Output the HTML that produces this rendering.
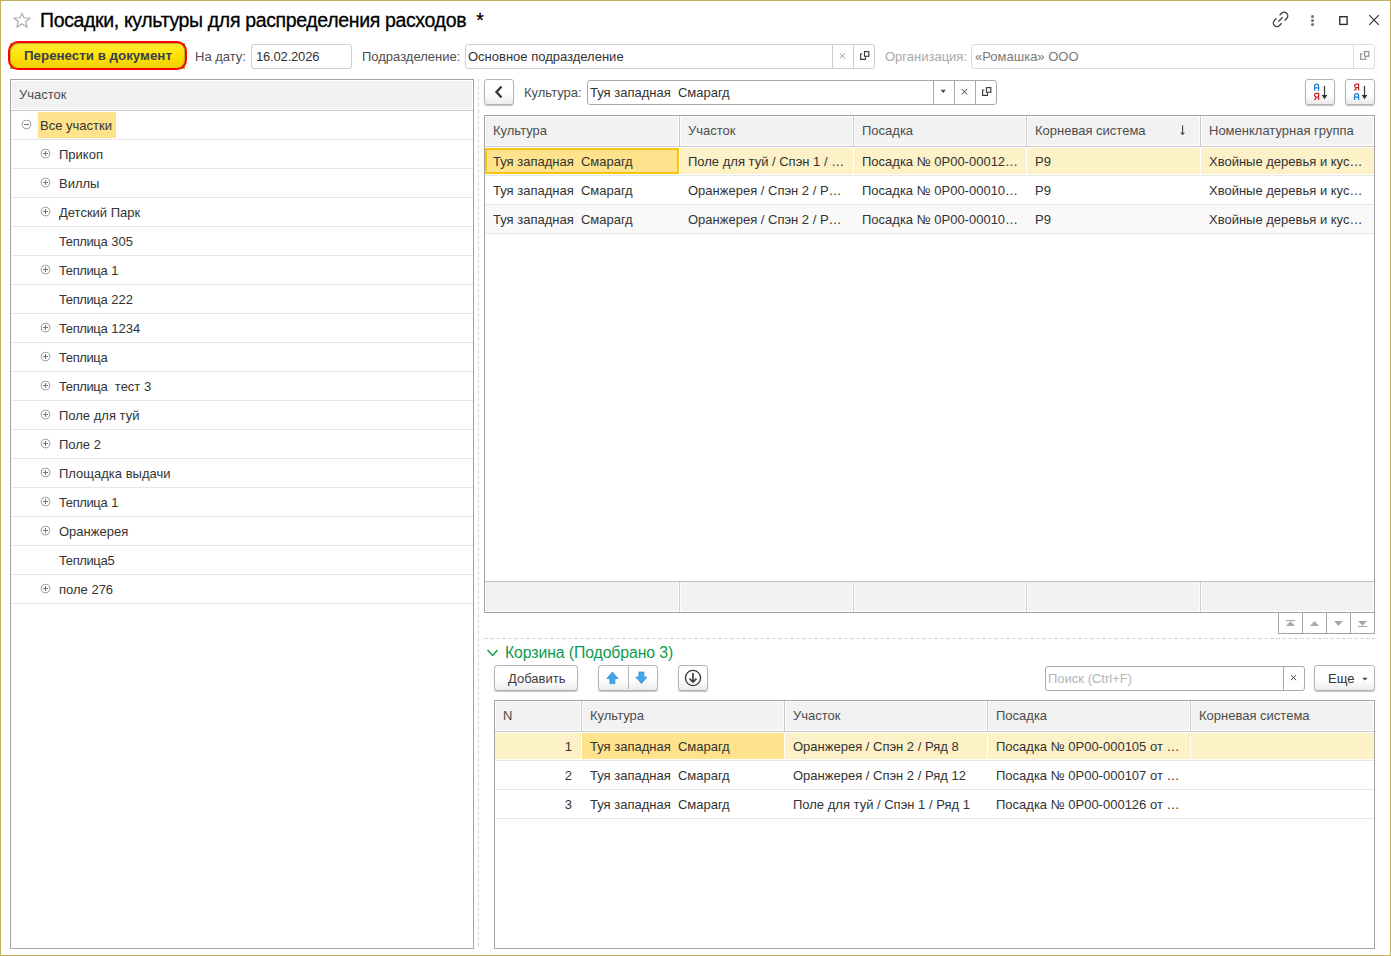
<!DOCTYPE html>
<html><head><meta charset="utf-8">
<style>
*{box-sizing:border-box}
html,body{margin:0;padding:0}
body{width:1391px;height:956px;position:relative;overflow:hidden;background:#fff;font-family:"Liberation Sans",sans-serif;font-size:13px;color:#333}
.a{position:absolute}
.t{position:absolute;white-space:pre;line-height:15px}
#frame{left:0;top:0;width:1391px;height:956px;border:1px solid #c1b25f}
.title{left:40px;top:5px;font-size:19.5px;letter-spacing:-0.35px;line-height:30px;color:#000;-webkit-text-stroke:0.3px #000}
.lbl{color:#4d4d4d}
.inp{position:absolute;border:1px solid #cfcfcf;border-radius:3px;background:#fff;height:25px}
.btn{position:absolute;border:1px solid #b4b4b4;border-radius:3px;background:linear-gradient(#fff 0%,#fff 55%,#ececec 100%);box-shadow:0 1px 1px rgba(0,0,0,.25)}
.grid{position:absolute;border:1px solid #a3a3a3;background:#fff}
.hdr{position:absolute;background:#f2f2f2}
.hl{position:absolute;height:1px;background:#c8c8c8}
.rl{position:absolute;height:1px;background:#e6e6e6}
.vs{position:absolute;width:1px;background:#cfcfcf}
</style></head><body>
<div id="frame" class="a"></div>

<!-- title bar -->
<svg class="a" style="left:0px;top:0px" width="40" height="32" viewBox="0 0 40 32"><path d="M22 13.1 L23.9 17.8 L30.1 18.3 L25.6 21.5 L27.2 27.2 L22 23.7 L16.8 27.2 L18.4 21.5 L13.9 18.3 L20.1 17.8 Z" fill="none" stroke="#a7acb2" stroke-width="1.15" stroke-linejoin="round"/></svg>
<div class="t title">Посадки, культуры для распределения расходов  *</div>

<!-- top right icons -->
<svg class="a" style="left:1268px;top:8px" width="24" height="24" viewBox="0 0 24 24"><g fill="none" stroke="#404040" stroke-width="1.35"><path d="M11.6 7.3 L13.6 5.3 A3.6 3.6 0 0 1 18.7 10.4 L16.6 12.4"/><path d="M8.5 10.3 L6.4 12.4 A3.6 3.6 0 0 0 11.5 17.5 L13.6 15.3"/><path d="M10.4 13.6 L14.6 9.3"/></g></svg>
<svg class="a" style="left:1305px;top:8px" width="16" height="24" viewBox="0 0 16 24"><circle cx="7.5" cy="8.5" r="1.5" fill="#6e6e6e"/><circle cx="7.5" cy="12.5" r="1.5" fill="#6e6e6e"/><circle cx="7.5" cy="16.6" r="1.5" fill="#6e6e6e"/></svg>
<svg class="a" style="left:1336px;top:13px" width="15" height="15" viewBox="0 0 15 15"><rect x="3.8" y="3.7" width="7.3" height="7.7" fill="none" stroke="#2a2a2a" stroke-width="1.35"/></svg>
<svg class="a" style="left:1366px;top:12px" width="16" height="16" viewBox="0 0 16 16"><path d="M3.3 3.2 L12.8 12.8 M12.8 3.2 L3.3 12.8" stroke="#2a2a2a" stroke-width="1.1"/></svg>

<!-- toolbar row -->
<div class="a" style="left:10px;top:43px;width:175px;height:26px;border-radius:1px;background:#a7a13a"></div>
<div class="a" style="left:8px;top:41px;width:179px;height:29px;border:2px solid #f00;border-radius:10px;background:linear-gradient(#ffeb3a 0%,#ffe300 50%,#efd000 100%);box-shadow:inset 1px 1px 0 #b9ac10,inset -1px 0 0 #c0b010"></div>
<div class="t" style="left:24px;top:48px;font-size:13.33px;font-weight:bold;color:#393e50">Перенести в документ</div>

<div class="t lbl" style="left:195px;top:49px">На дату:</div>
<div class="inp" style="left:251px;top:44px;width:101px"></div>
<div class="t" style="left:256px;top:49px;letter-spacing:-0.18px">16.02.2026</div>

<div class="t lbl" style="left:362px;top:49px">Подразделение:</div>
<div class="inp" style="left:465px;top:44px;width:410px"></div>
<div class="vs" style="left:832px;top:45px;height:23px"></div>
<div class="vs" style="left:853px;top:45px;height:23px"></div>
<div class="t" style="left:468px;top:49px">Основное подразделение</div>
<svg class="a" style="left:838px;top:51px" width="10" height="10" viewBox="0 0 10 10"><path d="M1.6 2.2 L7.2 7.6 M7.2 2.2 L1.6 7.6" stroke="#999" stroke-width="1"/></svg>
<svg class="a" style="left:858px;top:49px" width="14" height="14" viewBox="0 0 14 14"><g fill="none" stroke="#3c3c3c" stroke-width="1.15"><rect x="6.5" y="2.6" width="4.3" height="4.7"/><path d="M4.4 5 H2.6 V10.3 H7.5 V8.2"/></g></svg>

<div class="t" style="left:885px;top:49px;color:#a8a8a8">Организация:</div>
<div class="inp" style="left:971px;top:44px;width:404px;border-color:#dcdcdc"></div>
<div class="vs" style="left:1353px;top:45px;height:23px;background:#dcdcdc"></div>
<div class="t" style="left:975px;top:49px;color:#7a7a7a">«Ромашка» ООО</div>
<svg class="a" style="left:1358px;top:49px" width="14" height="14" viewBox="0 0 14 14"><g fill="none" stroke="#999" stroke-width="1.3"><rect x="6.5" y="2.6" width="4.3" height="4.7"/><path d="M4.4 5 H2.6 V10.3 H7.5 V8.2"/></g></svg>

<!-- splitter -->
<div class="a" style="left:478px;top:79px;width:1px;height:870px;background:repeating-linear-gradient(#d9d9d9 0 4px,transparent 4px 6px)"></div>

<!-- left tree panel -->
<div class="grid" style="left:10px;top:79px;width:464px;height:870px"></div>
<div class="hdr" style="left:12px;top:81px;width:460px;height:28px"></div>
<div class="hl" style="left:11px;top:110px;width:462px"></div>
<div class="t" style="left:19px;top:87px;color:#4d4d4d">Участок</div>
<div class="rl" style="left:11px;top:139px;width:462px"></div>
<div class="a" style="left:38px;top:112px;width:78px;height:26px;background:#fee28c"></div>
<svg class="a" style="left:21px;top:119px" width="11" height="11" viewBox="0 0 11 11"><circle cx="5.5" cy="5.5" r="4.3" fill="none" stroke="#a6a6a6" stroke-width="1.15"/><path d="M3 5.5 H8" stroke="#777" stroke-width="1"/></svg>
<div class="t" style="left:40px;top:118px">Все участки</div>
<div class="rl" style="left:11px;top:168px;width:462px"></div>
<svg class="a" style="left:40px;top:148px" width="11" height="11" viewBox="0 0 11 11"><circle cx="5.5" cy="5.5" r="4.3" fill="none" stroke="#a6a6a6" stroke-width="1.15"/><path d="M3 5.5 H8 M5.5 3 V8" stroke="#777" stroke-width="1"/></svg>
<div class="t" style="left:59px;top:147px">Прикоп</div>
<div class="rl" style="left:11px;top:197px;width:462px"></div>
<svg class="a" style="left:40px;top:177px" width="11" height="11" viewBox="0 0 11 11"><circle cx="5.5" cy="5.5" r="4.3" fill="none" stroke="#a6a6a6" stroke-width="1.15"/><path d="M3 5.5 H8 M5.5 3 V8" stroke="#777" stroke-width="1"/></svg>
<div class="t" style="left:59px;top:176px">Виллы</div>
<div class="rl" style="left:11px;top:226px;width:462px"></div>
<svg class="a" style="left:40px;top:206px" width="11" height="11" viewBox="0 0 11 11"><circle cx="5.5" cy="5.5" r="4.3" fill="none" stroke="#a6a6a6" stroke-width="1.15"/><path d="M3 5.5 H8 M5.5 3 V8" stroke="#777" stroke-width="1"/></svg>
<div class="t" style="left:59px;top:205px">Детский Парк</div>
<div class="rl" style="left:11px;top:255px;width:462px"></div>
<div class="t" style="left:59px;top:234px"><span style="letter-spacing:-0.4px">Теплиц</span>а 305</div>
<div class="rl" style="left:11px;top:284px;width:462px"></div>
<svg class="a" style="left:40px;top:264px" width="11" height="11" viewBox="0 0 11 11"><circle cx="5.5" cy="5.5" r="4.3" fill="none" stroke="#a6a6a6" stroke-width="1.15"/><path d="M3 5.5 H8 M5.5 3 V8" stroke="#777" stroke-width="1"/></svg>
<div class="t" style="left:59px;top:263px"><span style="letter-spacing:-0.4px">Теплиц</span>а 1</div>
<div class="rl" style="left:11px;top:313px;width:462px"></div>
<div class="t" style="left:59px;top:292px"><span style="letter-spacing:-0.4px">Теплиц</span>а 222</div>
<div class="rl" style="left:11px;top:342px;width:462px"></div>
<svg class="a" style="left:40px;top:322px" width="11" height="11" viewBox="0 0 11 11"><circle cx="5.5" cy="5.5" r="4.3" fill="none" stroke="#a6a6a6" stroke-width="1.15"/><path d="M3 5.5 H8 M5.5 3 V8" stroke="#777" stroke-width="1"/></svg>
<div class="t" style="left:59px;top:321px"><span style="letter-spacing:-0.4px">Теплиц</span>а 1234</div>
<div class="rl" style="left:11px;top:371px;width:462px"></div>
<svg class="a" style="left:40px;top:351px" width="11" height="11" viewBox="0 0 11 11"><circle cx="5.5" cy="5.5" r="4.3" fill="none" stroke="#a6a6a6" stroke-width="1.15"/><path d="M3 5.5 H8 M5.5 3 V8" stroke="#777" stroke-width="1"/></svg>
<div class="t" style="left:59px;top:350px"><span style="letter-spacing:-0.4px">Теплиц</span>а</div>
<div class="rl" style="left:11px;top:400px;width:462px"></div>
<svg class="a" style="left:40px;top:380px" width="11" height="11" viewBox="0 0 11 11"><circle cx="5.5" cy="5.5" r="4.3" fill="none" stroke="#a6a6a6" stroke-width="1.15"/><path d="M3 5.5 H8 M5.5 3 V8" stroke="#777" stroke-width="1"/></svg>
<div class="t" style="left:59px;top:379px"><span style="letter-spacing:-0.4px">Теплиц</span>а  тест 3</div>
<div class="rl" style="left:11px;top:429px;width:462px"></div>
<svg class="a" style="left:40px;top:409px" width="11" height="11" viewBox="0 0 11 11"><circle cx="5.5" cy="5.5" r="4.3" fill="none" stroke="#a6a6a6" stroke-width="1.15"/><path d="M3 5.5 H8 M5.5 3 V8" stroke="#777" stroke-width="1"/></svg>
<div class="t" style="left:59px;top:408px">Поле для туй</div>
<div class="rl" style="left:11px;top:458px;width:462px"></div>
<svg class="a" style="left:40px;top:438px" width="11" height="11" viewBox="0 0 11 11"><circle cx="5.5" cy="5.5" r="4.3" fill="none" stroke="#a6a6a6" stroke-width="1.15"/><path d="M3 5.5 H8 M5.5 3 V8" stroke="#777" stroke-width="1"/></svg>
<div class="t" style="left:59px;top:437px">Поле 2</div>
<div class="rl" style="left:11px;top:487px;width:462px"></div>
<svg class="a" style="left:40px;top:467px" width="11" height="11" viewBox="0 0 11 11"><circle cx="5.5" cy="5.5" r="4.3" fill="none" stroke="#a6a6a6" stroke-width="1.15"/><path d="M3 5.5 H8 M5.5 3 V8" stroke="#777" stroke-width="1"/></svg>
<div class="t" style="left:59px;top:466px">Площадка выдачи</div>
<div class="rl" style="left:11px;top:516px;width:462px"></div>
<svg class="a" style="left:40px;top:496px" width="11" height="11" viewBox="0 0 11 11"><circle cx="5.5" cy="5.5" r="4.3" fill="none" stroke="#a6a6a6" stroke-width="1.15"/><path d="M3 5.5 H8 M5.5 3 V8" stroke="#777" stroke-width="1"/></svg>
<div class="t" style="left:59px;top:495px"><span style="letter-spacing:-0.4px">Теплиц</span>а 1</div>
<div class="rl" style="left:11px;top:545px;width:462px"></div>
<svg class="a" style="left:40px;top:525px" width="11" height="11" viewBox="0 0 11 11"><circle cx="5.5" cy="5.5" r="4.3" fill="none" stroke="#a6a6a6" stroke-width="1.15"/><path d="M3 5.5 H8 M5.5 3 V8" stroke="#777" stroke-width="1"/></svg>
<div class="t" style="left:59px;top:524px">Оранжерея</div>
<div class="rl" style="left:11px;top:574px;width:462px"></div>
<div class="t" style="left:59px;top:553px"><span style="letter-spacing:-0.4px">Теплиц</span>а5</div>
<div class="rl" style="left:11px;top:603px;width:462px"></div>
<svg class="a" style="left:40px;top:583px" width="11" height="11" viewBox="0 0 11 11"><circle cx="5.5" cy="5.5" r="4.3" fill="none" stroke="#a6a6a6" stroke-width="1.15"/><path d="M3 5.5 H8 M5.5 3 V8" stroke="#777" stroke-width="1"/></svg>
<div class="t" style="left:59px;top:582px">поле 276</div>

<!-- right: culture filter -->
<div class="btn" style="left:484px;top:79px;width:30px;height:26px"></div>
<svg class="a" style="left:493px;top:85px" width="12" height="14" viewBox="0 0 12 14"><path d="M8.5 1.5 L3.5 7 L8.5 12.5" fill="none" stroke="#3a3a3a" stroke-width="2.4"/></svg>
<div class="t lbl" style="left:524px;top:85px">Культура:</div>
<div class="inp" style="left:587px;top:80px;width:410px;border-color:#a9a9a9"></div>
<div class="vs" style="left:933px;top:81px;height:23px;background:#a9a9a9"></div>
<div class="vs" style="left:954px;top:81px;height:23px;background:#a9a9a9"></div>
<div class="vs" style="left:975px;top:81px;height:23px;background:#a9a9a9"></div>
<div class="t" style="left:590px;top:85px">Туя западная  Смарагд</div>
<svg class="a" style="left:939px;top:88px" width="9" height="6" viewBox="0 0 9 6"><path d="M1.6 1.8 H6.9 L4.25 5 Z" fill="#444"/></svg>
<svg class="a" style="left:960px;top:87px" width="10" height="10" viewBox="0 0 10 10"><path d="M1.7 2 L7.2 7.5 M7.2 2 L1.7 7.5" stroke="#444" stroke-width="1"/></svg>
<svg class="a" style="left:980px;top:85px" width="14" height="14" viewBox="0 0 14 14"><g fill="none" stroke="#3c3c3c" stroke-width="1.15"><rect x="6.5" y="2.6" width="4.3" height="4.7"/><path d="M4.4 5 H2.6 V10.3 H7.5 V8.2"/></g></svg>

<!-- sort buttons -->
<div class="btn" style="left:1305px;top:79px;width:30px;height:26px"></div>
<div class="btn" style="left:1345px;top:79px;width:30px;height:26px"></div>

<div class="grid" style="left:484px;top:115px;width:891px;height:498px"></div>
<div class="hdr" style="left:486px;top:117px;width:887px;height:28px"></div>
<div class="hl" style="left:485px;top:146px;width:889px"></div>
<div class="a" style="left:678px;top:116px;width:3px;height:30px;background:#fff"></div>
<div class="vs" style="left:679px;top:116px;height:30px;background:#c8c8c8"></div>
<div class="a" style="left:852px;top:116px;width:3px;height:30px;background:#fff"></div>
<div class="vs" style="left:853px;top:116px;height:30px;background:#c8c8c8"></div>
<div class="a" style="left:1025px;top:116px;width:3px;height:30px;background:#fff"></div>
<div class="vs" style="left:1026px;top:116px;height:30px;background:#c8c8c8"></div>
<div class="a" style="left:1199px;top:116px;width:3px;height:30px;background:#fff"></div>
<div class="vs" style="left:1200px;top:116px;height:30px;background:#c8c8c8"></div>
<div class="t" style="left:493px;top:123px;color:#4d4d4d">Культура</div>
<div class="t" style="left:688px;top:123px;color:#4d4d4d">Участок</div>
<div class="t" style="left:862px;top:123px;color:#4d4d4d">Посадка</div>
<div class="t" style="left:1035px;top:123px;color:#4d4d4d">Корневая система</div>
<div class="t" style="left:1209px;top:123px;color:#4d4d4d">Номенклатурная группа</div>
<svg class="a" style="left:1179px;top:125px" width="7" height="12" viewBox="0 0 7 12"><path d="M3.6 0.4 V8.5" stroke="#383838" stroke-width="1.1"/><path d="M1 7 L3.6 10.2 L6.2 7 L3.6 8.3 Z" fill="#383838"/></svg>
<div class="a" style="left:485px;top:148px;width:889px;height:26px;background:#fdf1c8"></div>
<div class="a" style="left:679px;top:147px;width:1px;height:28px;background:#fff"></div>
<div class="a" style="left:853px;top:147px;width:1px;height:28px;background:#fff"></div>
<div class="a" style="left:1026px;top:147px;width:1px;height:28px;background:#fff"></div>
<div class="a" style="left:1200px;top:147px;width:1px;height:28px;background:#fff"></div>
<div class="a" style="left:485px;top:148px;width:194px;height:26px;background:#fee28c;border:2px solid #f7c412"></div>
<div class="rl" style="left:485px;top:175px;width:889px"></div>
<div class="t" style="left:493px;top:154px">Туя западная  Смарагд</div>
<div class="t" style="left:688px;top:154px">Поле для туй / Спэн 1 / …</div>
<div class="t" style="left:862px;top:154px">Посадка № 0Р00-00012…</div>
<div class="t" style="left:1035px;top:154px">Р9</div>
<div class="t" style="left:1209px;top:154px">Хвойные деревья и кус…</div>
<div class="rl" style="left:485px;top:204px;width:889px"></div>
<div class="t" style="left:493px;top:183px">Туя западная  Смарагд</div>
<div class="t" style="left:688px;top:183px">Оранжерея / Спэн 2 / Р…</div>
<div class="t" style="left:862px;top:183px">Посадка № 0Р00-00010…</div>
<div class="t" style="left:1035px;top:183px">Р9</div>
<div class="t" style="left:1209px;top:183px">Хвойные деревья и кус…</div>
<div class="a" style="left:485px;top:205px;width:889px;height:28px;background:#f9f9f9"></div>
<div class="rl" style="left:485px;top:233px;width:889px"></div>
<div class="t" style="left:493px;top:212px">Туя западная  Смарагд</div>
<div class="t" style="left:688px;top:212px">Оранжерея / Спэн 2 / Р…</div>
<div class="t" style="left:862px;top:212px">Посадка № 0Р00-00010…</div>
<div class="t" style="left:1035px;top:212px">Р9</div>
<div class="t" style="left:1209px;top:212px">Хвойные деревья и кус…</div>
<div class="hl" style="left:485px;top:581px;width:889px;background:#c0c0c0"></div>
<div class="hdr" style="left:486px;top:582px;width:887px;height:29px"></div>
<div class="a" style="left:678px;top:582px;width:3px;height:30px;background:#fff"></div>
<div class="vs" style="left:679px;top:582px;height:30px;background:#d0d0d0"></div>
<div class="a" style="left:852px;top:582px;width:3px;height:30px;background:#fff"></div>
<div class="vs" style="left:853px;top:582px;height:30px;background:#d0d0d0"></div>
<div class="a" style="left:1025px;top:582px;width:3px;height:30px;background:#fff"></div>
<div class="vs" style="left:1026px;top:582px;height:30px;background:#d0d0d0"></div>
<div class="a" style="left:1199px;top:582px;width:3px;height:30px;background:#fff"></div>
<div class="vs" style="left:1200px;top:582px;height:30px;background:#d0d0d0"></div>
<!-- sort icons -->
<svg class="a" style="left:1310px;top:83px" width="20" height="18" viewBox="0 0 20 18"><g fill="none" stroke-width="1.25"><path d="M4.6 7.8 V3.3 Q4.6 1.2 6.6 1.2 Q8.6 1.2 8.6 3.3 V7.8 M4.6 4.9 H8.6" stroke="#1f7ad1"/><path d="M8.6 16.9 V10.3 H6.4 Q4.6 10.3 4.6 12.15 Q4.6 14 6.4 14 H8.6 M6.8 14 L4.4 16.8" stroke="#c1272d"/></g><path d="M14.5 2.9 V13" stroke="#333" stroke-width="1.2"/><path d="M11.7 12 L14.5 16.2 L17.3 12 Z" fill="#333"/></svg>
<svg class="a" style="left:1350px;top:83px" width="20" height="18" viewBox="0 0 20 18"><g fill="none" stroke-width="1.25"><path d="M8.6 7.599999999999998 V1.0 H6.4 Q4.6 1.0 4.6 2.8499999999999996 Q4.6 4.699999999999999 6.4 4.699999999999999 H8.6 M6.8 4.699999999999999 L4.4 7.5" stroke="#c1272d"/><path d="M4.6 17.1 V12.600000000000001 Q4.6 10.5 6.6 10.5 Q8.6 10.5 8.6 12.600000000000001 V17.1 M4.6 14.200000000000001 H8.6" stroke="#1f7ad1"/></g><path d="M14.5 2.9 V13" stroke="#333" stroke-width="1.2"/><path d="M11.7 12 L14.5 16.2 L17.3 12 Z" fill="#333"/></svg>

<!-- nav buttons -->
<div class="a" style="left:1278px;top:612px;width:97px;height:22px;border:1px solid #a3a3a3;background:#fff"></div>
<div class="vs" style="left:1302px;top:613px;height:20px;background:#a3a3a3"></div>
<div class="vs" style="left:1326px;top:613px;height:20px;background:#a3a3a3"></div>
<div class="vs" style="left:1350px;top:613px;height:20px;background:#a3a3a3"></div>
<svg class="a" style="left:1278px;top:612px" width="97" height="22" viewBox="0 0 97 22"><g fill="#a8a8a8"><rect x="8" y="8" width="9" height="1.2"/><path d="M8 14 H17 L12.5 9.2 Z"/><path d="M32 14 H41 L36.5 9 Z"/><path d="M56 9 H65 L60.5 14 Z"/><path d="M80 9 H89 L84.5 13.8 Z"/><rect x="80" y="13.9" width="9" height="1.1"/></g></svg>

<!-- dashed hline -->
<div class="a" style="left:484px;top:638px;width:891px;height:1px;background:repeating-linear-gradient(90deg,#d6d6d6 0 4px,transparent 4px 6px)"></div>

<!-- korzina -->
<svg class="a" style="left:486px;top:648px" width="14" height="10" viewBox="0 0 14 10"><path d="M1.5 2 L6.5 7.5 L11.5 2" fill="none" stroke="#16994a" stroke-width="1.5"/></svg>
<div class="t" style="left:505px;top:644px;font-size:15.8px;letter-spacing:-0.1px;line-height:17px;color:#0d9a4c">Корзина (Подобрано 3)</div>

<div class="btn" style="left:494px;top:665px;width:84px;height:26px"></div>
<div class="t" style="left:508px;top:671px;color:#404040">Добавить</div>

<div class="btn" style="left:598px;top:665px;width:60px;height:26px"></div>
<div class="vs" style="left:628px;top:666px;height:23px;background:#b4b4b4"></div>
<svg class="a" style="left:606px;top:671px" width="14" height="14" viewBox="0 0 14 14"><path d="M6.4 1 L12 7.6 H8.9 V12.6 H3.9 V7.6 H0.8 Z" fill="#43a7ee" stroke="#2e84c6" stroke-width="0.7" stroke-linejoin="miter"/></svg>
<svg class="a" style="left:635px;top:671px" width="14" height="14" viewBox="0 0 14 14"><path d="M6.4 12.6 L12 6 H8.9 V1 H3.9 V6 H0.8 Z" fill="#43a7ee" stroke="#2e84c6" stroke-width="0.7" stroke-linejoin="miter"/></svg>

<div class="btn" style="left:678px;top:665px;width:30px;height:26px"></div>
<svg class="a" style="left:684px;top:669px" width="18" height="18" viewBox="0 0 18 18"><circle cx="9" cy="9" r="7.6" fill="none" stroke="#333" stroke-width="1.3"/><path d="M9 4 V13" stroke="#333" stroke-width="1.6"/><path d="M5.5 9.5 L9 13.2 L12.5 9.5" fill="none" stroke="#333" stroke-width="1.6"/></svg>

<div class="inp" style="left:1045px;top:666px;width:260px;border-color:#a9a9a9"></div>
<div class="vs" style="left:1283px;top:667px;height:23px;background:#a9a9a9"></div>
<div class="t" style="left:1048px;top:671px;color:#b5b5b5">Поиск (Ctrl+F)</div>
<svg class="a" style="left:1289px;top:673px" width="10" height="10" viewBox="0 0 10 10"><path d="M1.8 2.1 L7.2 7.2 M7.2 2.1 L1.8 7.2" stroke="#444" stroke-width="1"/></svg>

<div class="btn" style="left:1314px;top:665px;width:61px;height:26px"></div>
<div class="t" style="left:1328px;top:671px;color:#333">Еще</div>
<svg class="a" style="left:1361px;top:677px" width="8" height="5" viewBox="0 0 8 5"><path d="M1.2 0.8 H6.6 L3.9 3.6 Z" fill="#444"/></svg>

<div class="grid" style="left:494px;top:700px;width:881px;height:249px"></div>
<div class="hdr" style="left:496px;top:702px;width:877px;height:28px"></div>
<div class="hl" style="left:495px;top:731px;width:879px"></div>
<div class="a" style="left:580px;top:701px;width:3px;height:30px;background:#fff"></div>
<div class="vs" style="left:581px;top:701px;height:30px;background:#c8c8c8"></div>
<div class="a" style="left:783px;top:701px;width:3px;height:30px;background:#fff"></div>
<div class="vs" style="left:784px;top:701px;height:30px;background:#c8c8c8"></div>
<div class="a" style="left:986px;top:701px;width:3px;height:30px;background:#fff"></div>
<div class="vs" style="left:987px;top:701px;height:30px;background:#c8c8c8"></div>
<div class="a" style="left:1189px;top:701px;width:3px;height:30px;background:#fff"></div>
<div class="vs" style="left:1190px;top:701px;height:30px;background:#c8c8c8"></div>
<div class="t" style="left:503px;top:708px;color:#4d4d4d">N</div>
<div class="t" style="left:590px;top:708px;color:#4d4d4d">Культура</div>
<div class="t" style="left:793px;top:708px;color:#4d4d4d">Участок</div>
<div class="t" style="left:996px;top:708px;color:#4d4d4d">Посадка</div>
<div class="t" style="left:1199px;top:708px;color:#4d4d4d">Корневая система</div>
<div class="a" style="left:495px;top:733px;width:879px;height:26px;background:#fdf1c8"></div>
<div class="a" style="left:581px;top:732px;width:1px;height:28px;background:#fff"></div>
<div class="a" style="left:784px;top:732px;width:1px;height:28px;background:#fff"></div>
<div class="a" style="left:987px;top:732px;width:1px;height:28px;background:#fff"></div>
<div class="a" style="left:1190px;top:732px;width:1px;height:28px;background:#fff"></div>
<div class="a" style="left:582px;top:733px;width:202px;height:26px;background:#fee28c"></div>
<div class="rl" style="left:495px;top:760px;width:879px"></div>
<div class="t" style="left:494px;width:78px;text-align:right;top:739px">1</div>
<div class="t" style="left:590px;top:739px">Туя западная  Смарагд</div>
<div class="t" style="left:793px;top:739px">Оранжерея / Спэн 2 / Ряд 8</div>
<div class="t" style="left:996px;top:739px">Посадка № 0Р00-000105 от …</div>
<div class="t" style="left:1199px;top:739px"></div>
<div class="rl" style="left:495px;top:789px;width:879px"></div>
<div class="t" style="left:494px;width:78px;text-align:right;top:768px">2</div>
<div class="t" style="left:590px;top:768px">Туя западная  Смарагд</div>
<div class="t" style="left:793px;top:768px">Оранжерея / Спэн 2 / Ряд 12</div>
<div class="t" style="left:996px;top:768px">Посадка № 0Р00-000107 от …</div>
<div class="t" style="left:1199px;top:768px"></div>
<div class="rl" style="left:495px;top:818px;width:879px"></div>
<div class="t" style="left:494px;width:78px;text-align:right;top:797px">3</div>
<div class="t" style="left:590px;top:797px">Туя западная  Смарагд</div>
<div class="t" style="left:793px;top:797px">Поле для туй / Спэн 1 / Ряд 1</div>
<div class="t" style="left:996px;top:797px">Посадка № 0Р00-000126 от …</div>
<div class="t" style="left:1199px;top:797px"></div>
</body></html>
